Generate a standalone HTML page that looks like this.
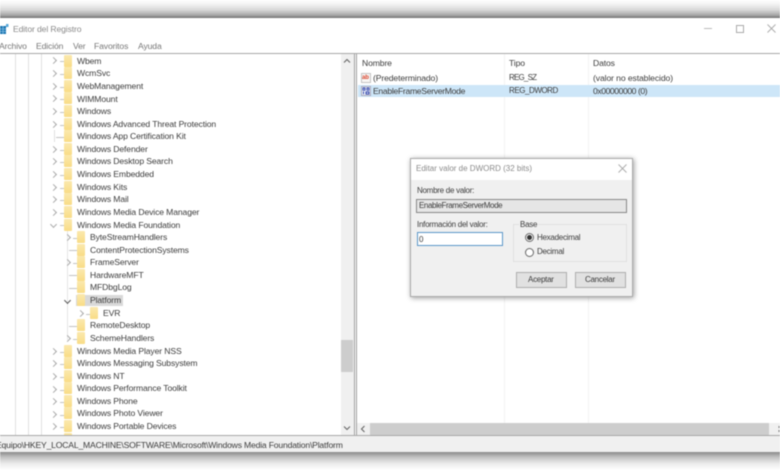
<!DOCTYPE html>
<html><head><meta charset="utf-8"><style>
html,body{margin:0;padding:0;width:780px;height:470px;overflow:hidden;background:#fff}
body{position:relative;font-family:"Liberation Sans",sans-serif;font-size:8.6px;letter-spacing:-.12px;color:#3c3c3c}
div,span{position:absolute;white-space:nowrap}
#all{left:0;top:0;width:780px;height:470px;filter:blur(.4px)}
.t{left:77px;line-height:12px;height:12px}
.k{font-size:8px;letter-spacing:-.27px}
.f{left:64px;width:8px;height:12px;background:linear-gradient(#fbe9ae,#f9dc86);border-radius:1px}
.c{left:51px;width:4px;height:4px;border-top:1px solid #aaa;border-right:1px solid #aaa;transform:rotate(45deg)}
.d{left:60px;width:4px;height:1px;background:#c4c4c4}
.v{width:1px;background:#e0e0e0}
.g{color:#8a8a8a}
</style></head><body><div id="all">
<div style="left:0;top:0;width:780px;height:18px;background:linear-gradient(#fff 0,#f2f2f2 25%,#d8d8d8 55%,#a5a5a5 85%,#6e6e6e 100%)"></div>
<div style="left:0;top:452px;width:780px;height:18px;background:linear-gradient(#8a8a8a 0,#c4c4c4 30%,#ececec 65%,#fff 100%)"></div>

<svg style="position:absolute;left:0;top:23px" width="9" height="12"><rect x="0" y="3" width="6" height="8" fill="#1e78b4"/><rect x="6" y="1" width="2.5" height="3" fill="#5aa8d8"/><path d="M0 6h6M0 8.5h6M3 3v8" stroke="#9fd0ee" stroke-width=".6"/></svg>
<div class="g" style="left:13px;top:23px;line-height:12px">Editor del Registro</div>
<div style="left:0;top:53px;width:780px;height:1px;background:#a8a8a8"></div>
<div class="g" style="left:-1px;top:40px;line-height:12px;color:#777">Archivo</div>
<div class="g" style="left:36px;top:40px;line-height:12px;color:#777">Edición</div>
<div class="g" style="left:73px;top:40px;line-height:12px;color:#777">Ver</div>
<div class="g" style="left:94px;top:40px;line-height:12px;color:#777">Favoritos</div>
<div class="g" style="left:138px;top:40px;line-height:12px;color:#777">Ayuda</div>
<div style="left:704px;top:28px;width:8px;height:1px;background:#bbb"></div>
<div style="left:736px;top:25px;width:6px;height:6px;border:1px solid #aaa"></div>
<svg style="position:absolute;left:767px;top:24px" width="9" height="9"><path d="M.5 .5l8 8M8.5 .5l-8 8" stroke="#aaa" stroke-width=".9"/></svg>

<div class="v" style="left:15px;top:54px;height:382px"></div>
<div class="v" style="left:28px;top:54px;height:382px"></div>
<div class="v" style="left:41px;top:54px;height:382px"></div>
<div class="v" style="left:54px;top:130px;height:12px"></div>
<div class="v" style="left:67px;top:230px;height:110px;background:#e6e6e6"></div>

<div class="c" style="top:58px"></div><div class="d" style="top:61px"></div><div class="f" style="top:55px"></div><div class="t" style="top:55px">Wbem</div>
<div class="c" style="top:71px"></div><div class="d" style="top:74px"></div><div class="f" style="top:67px"></div><div class="t" style="top:67px">WcmSvc</div>
<div class="c" style="top:84px"></div><div class="d" style="top:87px"></div><div class="f" style="top:80px"></div><div class="t" style="top:80px">WebManagement</div>
<div class="c" style="top:96px"></div><div class="d" style="top:99px"></div><div class="f" style="top:92px"></div><div class="t" style="top:93px">WIMMount</div>
<div class="c" style="top:109px"></div><div class="d" style="top:112px"></div><div class="f" style="top:105px"></div><div class="t" style="top:105px">Windows</div>
<div class="c" style="top:122px"></div><div class="d" style="top:125px"></div><div class="f" style="top:118px"></div><div class="t" style="top:118px">Windows Advanced Threat Protection</div>
<div class="d" style="left:56px;width:8px;top:137px"></div><div class="f" style="top:130px"></div><div class="t" style="top:130px">Windows App Certification Kit</div>
<div class="c" style="top:147px"></div><div class="d" style="top:150px"></div><div class="f" style="top:143px"></div><div class="t" style="top:143px">Windows Defender</div>
<div class="c" style="top:159px"></div><div class="d" style="top:162px"></div><div class="f" style="top:155px"></div><div class="t" style="top:155px">Windows Desktop Search</div>
<div class="c" style="top:172px"></div><div class="d" style="top:175px"></div><div class="f" style="top:168px"></div><div class="t" style="top:168px">Windows Embedded</div>
<div class="c" style="top:185px"></div><div class="d" style="top:188px"></div><div class="f" style="top:181px"></div><div class="t" style="top:181px">Windows Kits</div>
<div class="c" style="top:197px"></div><div class="d" style="top:200px"></div><div class="f" style="top:193px"></div><div class="t" style="top:193px">Windows Mail</div>
<div class="c" style="top:210px"></div><div class="d" style="top:213px"></div><div class="f" style="top:206px"></div><div class="t" style="top:206px">Windows Media Device Manager</div>
<div class="c" style="top:222px;transform:rotate(135deg)"></div><div class="d" style="top:225px"></div><div class="f" style="top:219px"></div><div class="t" style="top:219px">Windows Media Foundation</div>

<div class="c" style="left:65px;top:235px"></div><div class="d" style="left:73px;top:238px"></div><div class="f" style="left:77px;top:231px"></div><div class="t" style="left:90px;top:231px">ByteStreamHandlers</div>
<div class="d" style="left:69px;width:8px;top:250px"></div><div class="f" style="left:77px;top:244px"></div><div class="t" style="left:90px;top:244px">ContentProtectionSystems</div>
<div class="c" style="left:65px;top:260px"></div><div class="d" style="left:73px;top:263px"></div><div class="f" style="left:77px;top:256px"></div><div class="t" style="left:90px;top:256px">FrameServer</div>
<div class="d" style="left:69px;width:8px;top:275px"></div><div class="f" style="left:77px;top:269px"></div><div class="t" style="left:90px;top:269px">HardwareMFT</div>
<div class="d" style="left:69px;width:8px;top:288px"></div><div class="f" style="left:77px;top:281px"></div><div class="t" style="left:90px;top:281px">MFDbgLog</div>
<div style="left:76px;top:295px;width:47px;height:11px;background:#d9d9d9"></div>
<div class="c" style="left:65px;top:298px;transform:rotate(135deg);border-color:#555"></div><div class="f" style="left:77px;top:294px"></div><div class="t" style="left:90px;top:294px">Platform</div>
<div class="c" style="left:78px;top:311px"></div><div class="d" style="left:86px;top:314px"></div><div class="f" style="left:90px;top:307px"></div><div class="t" style="left:103px;top:307px">EVR</div>
<div class="d" style="left:69px;width:8px;top:326px"></div><div class="f" style="left:77px;top:319px"></div><div class="t" style="left:90px;top:319px">RemoteDesktop</div>
<div class="c" style="left:65px;top:336px"></div><div class="d" style="left:73px;top:339px"></div><div class="f" style="left:77px;top:332px"></div><div class="t" style="left:90px;top:332px">SchemeHandlers</div>

<div class="c" style="top:349px"></div><div class="d" style="top:352px"></div><div class="f" style="top:345px"></div><div class="t" style="top:345px">Windows Media Player NSS</div>
<div class="c" style="top:361px"></div><div class="d" style="top:364px"></div><div class="f" style="top:357px"></div><div class="t" style="top:357px">Windows Messaging Subsystem</div>
<div class="c" style="top:374px"></div><div class="d" style="top:377px"></div><div class="f" style="top:370px"></div><div class="t" style="top:370px">Windows NT</div>
<div class="c" style="top:387px"></div><div class="d" style="top:390px"></div><div class="f" style="top:382px"></div><div class="t" style="top:382px">Windows Performance Toolkit</div>
<div class="c" style="top:399px"></div><div class="d" style="top:402px"></div><div class="f" style="top:395px"></div><div class="t" style="top:395px">Windows Phone</div>
<div class="c" style="top:412px"></div><div class="d" style="top:415px"></div><div class="f" style="top:407px"></div><div class="t" style="top:407px">Windows Photo Viewer</div>
<div class="c" style="top:424px"></div><div class="d" style="top:427px"></div><div class="f" style="top:420px"></div><div class="t" style="top:420px">Windows Portable Devices</div>
<div class="f" style="top:433px;height:3px"></div>

<div style="left:341px;top:54px;width:13px;height:382px;background:#f0f0f0"></div>
<div style="left:341px;top:340px;width:12px;height:32px;background:#cdcdcd"></div>
<svg style="position:absolute;left:343px;top:58px" width="8" height="6"><path d="M1 4.5L4 1.5L7 4.5" fill="none" stroke="#666" stroke-width="1.1"/></svg>
<svg style="position:absolute;left:343px;top:425px" width="8" height="6"><path d="M1 1.5L4 4.5L7 1.5" fill="none" stroke="#666" stroke-width="1.1"/></svg>
<div style="left:354px;top:54px;width:1px;height:382px;background:#a0a0a0"></div>
<div style="left:356px;top:54px;width:1px;height:382px;background:#a0a0a0"></div>
<div style="left:0;top:435px;width:780px;height:1px;background:#a8a8a8"></div>

<div style="left:504px;top:54px;width:1px;height:369px;background:#f3f3f3"></div>
<div style="left:588px;top:54px;width:1px;height:369px;background:#f3f3f3"></div>
<div class="t" style="left:362px;top:57px">Nombre</div>
<div class="t" style="left:509px;top:57px">Tipo</div>
<div class="t" style="left:593px;top:57px">Datos</div>
<div style="left:358px;top:85px;width:422px;height:12px;background:#cde6f8"></div>
<svg style="position:absolute;left:361px;top:73px" width="10" height="10"><rect x=".5" y=".5" width="9" height="9" fill="#f8f6f4" stroke="#c4c4c4"/><text x="1" y="6" font-family="Liberation Sans" font-size="6" font-weight="bold" fill="#d8452e">ab</text></svg>
<svg style="position:absolute;left:361px;top:86px" width="10" height="10"><rect x=".5" y=".5" width="9" height="9" fill="#eef2fa" stroke="#aab"/><path d="M2 2h2v2.2h-2zM6 2h2v2.2h-2zM2 6h1M2.5 6v2.2M5 6h3v2h-3z" fill="none" stroke="#2a3fa8" stroke-width=".9"/></svg>
<div class="t" style="left:373px;top:72px">(Predeterminado)</div>
<div class="t" style="left:509px;top:72px;font-size:8px;letter-spacing:-.8px">REG_SZ</div>
<div class="t" style="left:593px;top:72px;letter-spacing:-.1px">(valor no establecido)</div>
<div class="t" style="left:373px;top:85px;letter-spacing:-.3px">EnableFrameServerMode</div>
<div class="t" style="left:509px;top:85px;font-size:8px;letter-spacing:-.45px">REG_DWORD</div>
<div class="t" style="left:593px;top:85px;letter-spacing:-.43px">0x00000000 (0)</div>

<div style="left:357px;top:423px;width:423px;height:12px;background:#f0f0f0"></div>
<div style="left:370px;top:423px;width:399px;height:12px;background:#cdcdcd"></div>
<svg style="position:absolute;left:360px;top:425px" width="6" height="8"><path d="M4.5 1L1.5 4L4.5 7" fill="none" stroke="#666" stroke-width="1.1"/></svg>
<svg style="position:absolute;left:778px;top:426px" width="2" height="6"><path d="M1 0v2M1 4v2" stroke="#777" stroke-width="1"/></svg>

<div style="left:0;top:436px;width:780px;height:16px;background:#f0f0f0"></div>
<div class="t" style="left:-4px;top:439px;letter-spacing:-.18px">Equipo\HKEY_LOCAL_MACHINE\SOFTWARE\Microsoft\Windows Media Foundation\Platform</div>

<div style="left:410px;top:158px;width:223px;height:139px;background:#f0f0f0;border:1px solid #aaa;box-shadow:1px 1px 5px rgba(0,0,0,.4);box-sizing:border-box"></div>
<div style="left:411px;top:159px;width:221px;height:21px;background:#fff"></div>
<div class="g" style="left:416px;top:163px;line-height:12px;font-size:8px;letter-spacing:0">Editar valor de DWORD (32 bits)</div>
<svg style="position:absolute;left:618px;top:164px" width="9" height="9"><path d="M.5 .5l8 8M8.5 .5l-8 8" stroke="#aaa" stroke-width=".9"/></svg>
<div class="t k" style="left:417px;top:185px">Nombre de valor:</div>
<div style="left:416px;top:199px;width:211px;height:14px;background:#e6e6e6;border:1px solid #888;box-sizing:border-box"></div>
<div class="t k" style="left:419px;top:200px;letter-spacing:-.4px">EnableFrameServerMode</div>
<div class="t k" style="left:417px;top:219px">Información del valor:</div>
<div style="left:417px;top:232px;width:86px;height:14px;background:#fff;border:1px solid #5b97c8;box-sizing:border-box"></div>
<div class="t k" style="left:419px;top:234px">0</div>
<div style="left:513px;top:224px;width:114px;height:38px;border:1px solid #e0e0e0;box-sizing:border-box"></div>
<div class="t k" style="left:519px;top:219px;background:#f0f0f0;padding:0 1px">Base</div>
<div style="left:525px;top:233px;width:7px;height:7px;border:1px solid #666;border-radius:50%;background:#fff"></div>
<div style="left:527px;top:235px;width:5px;height:5px;border-radius:50%;background:#333"></div>
<div class="t k" style="left:537px;top:232px">Hexadecimal</div>
<div style="left:525px;top:248px;width:7px;height:7px;border:1px solid #666;border-radius:50%;background:#fff"></div>
<div class="t k" style="left:537px;top:246px">Decimal</div>
<div style="left:516px;top:272px;width:51px;height:16px;background:#e1e1e1;border:1px solid #adadad;box-sizing:border-box"></div>
<div class="t k" style="left:528px;top:274px">Aceptar</div>
<div style="left:575px;top:272px;width:51px;height:16px;background:#e1e1e1;border:1px solid #adadad;box-sizing:border-box"></div>
<div class="t k" style="left:585px;top:274px">Cancelar</div>
</div></body></html>
